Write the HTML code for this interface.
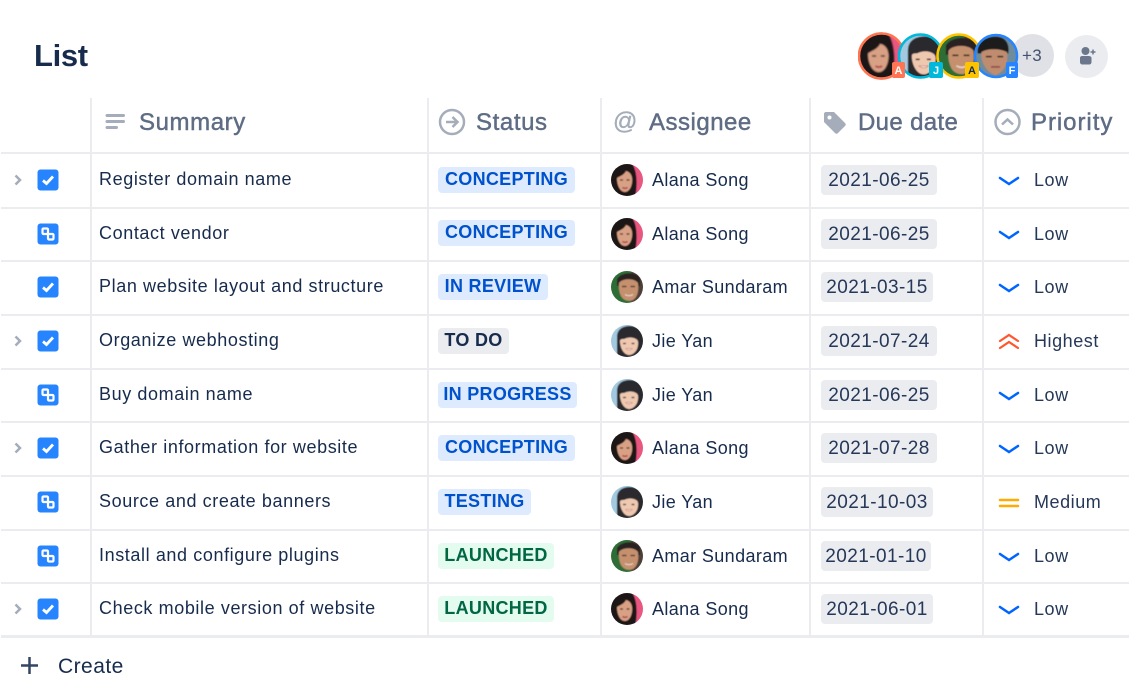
<!DOCTYPE html>
<html lang="en">
<head>
<meta charset="utf-8">
<title>List</title>
<style>
html,body{margin:0;padding:0;background:#fff}
#p{position:relative;width:1136px;height:693px;overflow:hidden;background:#fff;font-family:"Liberation Sans",sans-serif;color:#172b4d}
#p div,#p span,#p svg{position:absolute}
.h{background:#ebecf0}
.th{top:108px;font-size:24px;line-height:30px;color:#5e6c84;letter-spacing:.6px;-webkit-text-stroke:.45px #5e6c84;white-space:nowrap}
.r{left:0;width:1136px;height:54px}
.t{left:99px;top:12px;font-size:18px;line-height:26px;letter-spacing:.6px;color:#172b4d;white-space:nowrap}
.ic{left:37px;top:15px;width:22px;height:22px}
.ch{left:11px;top:19px;width:14px;height:14px}
.b{left:438px;top:13px;height:26px;border-radius:4px;font-size:18px;line-height:25px;font-weight:700;letter-spacing:.3px;text-align:center;white-space:nowrap}
.bl{background:#deebff;color:#0052cc}
.gr{background:#e3fcef;color:#006644}
.ne{background:#ebecf0;color:#172b4d}
.av{left:611px;top:10px;width:32px;height:32px}
.n{left:652px;top:13px;font-size:18px;line-height:26px;letter-spacing:.38px;white-space:nowrap}
.d{left:821px;top:11px;height:30px;border-radius:4px;background:#ebecf0;font-size:19px;line-height:32px;letter-spacing:.42px;color:#253858;text-align:center;white-space:nowrap}
.pi{left:998px;top:18px;width:22px;height:18px}
.pt{left:1034px;top:13px;font-size:18px;line-height:26px;letter-spacing:.55px;color:#253858;white-space:nowrap}
</style>
</head>
<body>
<div id="p">
<svg width="0" height="0" style="left:0;top:0">
<defs>
<clipPath id="c"><circle cx="16" cy="16" r="16"/></clipPath>
<filter id="s" x="-10%" y="-10%" width="120%" height="120%"><feGaussianBlur stdDeviation=".5"/></filter>
<symbol id="alana" viewBox="0 0 32 32"><g clip-path="url(#c)"><g filter="url(#s)">
<rect x="-2" y="-2" width="36" height="36" fill="#e9577f"/>
<path d="M-2 -2H20C26 5 27 20 24 34H-2Z" fill="#1f1416"/>
<path d="M6 15C6 8 11 6 15 7C20 8 22 13 21 19C20 25 17 28 14 28C9 28 6 21 6 15Z" fill="#d8a084"/>
<path d="M6 14C9 12 13 11 15 7C10 5 6 9 6 14Z" fill="#1f1416"/>
<path d="M9 16h3M15.500 16h3" stroke="#4a2f28" stroke-width="1.200"/>
<path d="M11.500 23.500C13 24.500 15 24.500 16.500 23.500" stroke="#b0404a" stroke-width="1.400" fill="none"/>
</g></g></symbol>
<symbol id="jie" viewBox="0 0 32 32"><g clip-path="url(#c)"><g filter="url(#s)">
<rect x="-2" y="-2" width="36" height="36" fill="#a3c9e0"/>
<path d="M6 34V12C6 4 12 1 19 1C28 1 34 8 34 16V34Z" fill="#2c2a2f"/>
<path d="M9 16C9 14 11 14 13 14C17 12 22 12 25 14C27 15 27.500 17 27 20C26.500 26 22 30 18 30C13 30 9 23 9 16Z" fill="#efc8b0"/>
<path d="M12 18.500h3M20.500 18.500h3" stroke="#4a332c" stroke-width="1.200"/>
<path d="M14.500 23.500C16.500 25.500 19.500 25.500 21.500 23.500Z" fill="#f8e8e0" stroke="#c07068" stroke-width=".5"/>
</g></g></symbol>
<symbol id="amar" viewBox="0 0 32 32"><g clip-path="url(#c)"><g filter="url(#s)">
<rect x="-2" y="-2" width="36" height="36" fill="#2f6d36"/>
<rect x="20" y="-2" width="14" height="36" fill="#4d3f38"/>
<path d="M6 8C10 1 24 0 29 7V15H6Z" fill="#2b2422"/>
<path d="M8 12C11 7 24 7 27 12C28 18 27 26 22 29C17 31 12 29 10 25C8 21 7.500 16 8 12Z" fill="#c4906e"/>
<path d="M11 15.500h4.500M19.500 15.500h4.500" stroke="#452e25" stroke-width="1.200"/>
<path d="M14 23.500C16.500 25 19.500 25 22 23.500" stroke="#e8d4c6" stroke-width="1.200" fill="none"/>
</g></g></symbol>
<symbol id="fran" viewBox="0 0 32 32"><g clip-path="url(#c)"><g filter="url(#s)">
<rect x="-2" y="-2" width="36" height="36" fill="#6f8b9a"/>
<path d="M2 14C1 4 10 0 18 1C25 2 27 8 26 14Z" fill="#1d1b1d"/>
<path d="M5 13C9 10 20 10 25 13C26 20 24 28 16 31C9 29 4 20 5 13Z" fill="#c08c6f"/>
<path d="M8.500 16.500h4.500M17.500 16.500h4.500" stroke="#33211c" stroke-width="1.200"/>
<path d="M12.500 24.500h7" stroke="#8f5048" stroke-width="1.300"/>
</g></g></symbol>
</defs>
</svg>

<div style="left:34px;top:37px;font-size:31px;line-height:38px;font-weight:700;letter-spacing:-.35px;color:#172b4d">List</div>

<!-- avatar group -->
<div style="left:1011px;top:34px;width:43px;height:43px;border-radius:50%;background:#dfe1e6"></div>
<div style="left:1022px;top:46px;font-size:17px;line-height:20px;color:#42526e;letter-spacing:.3px">+3</div>
<svg style="left:858px;top:32px" width="162" height="48" viewBox="0 0 162 48">
<circle cx="23.500" cy="24" r="22.500" fill="#fff" stroke="#ff7452" stroke-width="2.500"/>
<use href="#alana" x="2" y="2.500" width="43" height="43"/>
<circle cx="23.500" cy="24" r="22.500" fill="none" stroke="#ff7452" stroke-width="2.500"/>
<use href="#jie" x="42" y="3" width="42" height="42"/>
<circle cx="62.500" cy="24" r="21.500" fill="none" stroke="#00b8d9" stroke-width="2.500"/>
<use href="#amar" x="80" y="3" width="42" height="42"/>
<circle cx="101" cy="24" r="21.500" fill="none" stroke="#ffc400" stroke-width="2.500"/>
<use href="#fran" x="117" y="3.500" width="41" height="41"/>
<circle cx="138" cy="24" r="21" fill="none" stroke="#2684ff" stroke-width="2.500"/>
<rect x="34" y="30" width="13" height="16" rx="2" fill="#ff7452"/>
<rect x="71" y="30" width="14" height="16" rx="2" fill="#00b8d9"/>
<rect x="107" y="30" width="14" height="16" rx="2" fill="#ffc400"/>
<rect x="148" y="30" width="12" height="16" rx="2" fill="#2684ff"/>
<g font-family="Liberation Sans, sans-serif" font-size="11" font-weight="700" text-anchor="middle">
<text x="40.500" y="42" fill="#fff">A</text>
<text x="78" y="42" fill="#fff">J</text>
<text x="114" y="42" fill="#172b4d">A</text>
<text x="154" y="42" fill="#fff">F</text>
</g>
</svg>
<div style="left:1065px;top:35px;width:43px;height:43px;border-radius:50%;background:#ebecf0"></div>
<svg style="left:1076px;top:45px" width="22" height="22" viewBox="0 0 22 22">
<circle cx="9.500" cy="6" r="4" fill="#6b778c"/>
<path d="M4 13C4 11.500 5 11 6.500 11H12.500C14 11 15.500 11.500 15.500 13V17C15.500 18.500 14.500 19.500 13 19.500H6.500C5 19.500 4 18.500 4 17Z" fill="#6b778c"/>
<path d="M17 4.500v5M14.500 7h5" stroke="#6b778c" stroke-width="1.500"/>
</svg>

<!-- grid lines -->
<div class="h" style="left:90px;top:98px;width:2px;height:538px"></div>
<div class="h" style="left:427px;top:98px;width:2px;height:538px"></div>
<div class="h" style="left:600px;top:98px;width:2px;height:538px"></div>
<div class="h" style="left:809px;top:98px;width:2px;height:538px"></div>
<div class="h" style="left:982px;top:98px;width:2px;height:538px"></div>
<div class="h" style="left:1px;top:152px;width:1128px;height:2px"></div>
<div class="h" style="left:1px;top:207px;width:1128px;height:2px"></div>
<div class="h" style="left:1px;top:260px;width:1128px;height:2px"></div>
<div class="h" style="left:1px;top:314px;width:1128px;height:2px"></div>
<div class="h" style="left:1px;top:368px;width:1128px;height:2px"></div>
<div class="h" style="left:1px;top:421px;width:1128px;height:2px"></div>
<div class="h" style="left:1px;top:475px;width:1128px;height:2px"></div>
<div class="h" style="left:1px;top:529px;width:1128px;height:2px"></div>
<div class="h" style="left:1px;top:582px;width:1128px;height:2px"></div>
<div class="h" style="left:1px;top:635px;width:1128px;height:3px"></div>

<!-- header -->
<svg style="left:105px;top:113px" width="20" height="18" viewBox="0 0 20 18"><path d="M2 2.500H18.500M2 8.500H18.500M2 14.500H11.500" stroke="#a5adba" stroke-width="3" stroke-linecap="round"/></svg>
<div class="th" style="left:139px">Summary</div>
<svg style="left:438px;top:108px" width="28" height="28" viewBox="0 0 28 28"><circle cx="14" cy="14" r="12" fill="none" stroke="#a5adba" stroke-width="2.500"/><path d="M8 14H19M14.500 9L19.500 14L14.500 19" fill="none" stroke="#a5adba" stroke-width="2.500"/></svg>
<div class="th" style="left:476px">Status</div>
<div style="left:613px;top:108px;font-size:24px;line-height:28px;color:#a5adba;-webkit-text-stroke:.4px #a5adba">@</div>
<div class="th" style="left:649px;letter-spacing:.5px">Assignee</div>
<svg style="left:823px;top:111px" width="24" height="24" viewBox="0 0 24 24"><path d="M1 3C1 1.500 2 1 3 1H11L22 12C23 13 23 14 22 15L15 22C14 23 13 23 12 22L1 11Z" fill="#a5adba"/><circle cx="6.500" cy="6.500" r="2" fill="#fff"/></svg>
<div class="th" style="left:858px;letter-spacing:.35px">Due date</div>
<svg style="left:994px;top:108px" width="28" height="28" viewBox="0 0 28 28"><circle cx="13.500" cy="14" r="12" fill="none" stroke="#a5adba" stroke-width="2.500"/><path d="M8 16.500L13.500 11.500L19 16.500" fill="none" stroke="#a5adba" stroke-width="2.500"/></svg>
<div class="th" style="left:1031px;letter-spacing:.95px">Priority</div>

<!-- rows -->
<div class="r" style="top:154px">
<svg class="ch" viewBox="0 0 14 14"><path d="M4.500 2.500L9 7L4.500 11.500" fill="none" stroke="#a5adba" stroke-width="2.500"/></svg>
<svg class="ic" viewBox="0 0 22 22"><rect x=".5" width="21" height="21" rx="3" y=".5" fill="#2684ff"/><path d="M6 11.500L9.500 14.500L16 7.500" fill="none" stroke="#fff" stroke-width="2.800"/></svg>
<div class="t">Register domain name</div>
<div class="b bl" style="width:137px">CONCEPTING</div>
<svg class="av"><use href="#alana" width="32" height="32"/></svg>
<div class="n">Alana Song</div>
<div class="d" style="width:116px">2021-06-25</div>
<svg class="pi" viewBox="0 0 22 18"><path d="M2 6L11 12L20 6" fill="none" stroke="#0065ff" stroke-width="2.500" stroke-linecap="round"/></svg>
<div class="pt">Low</div>
</div>

<div class="r" style="top:208px">
<svg class="ic" viewBox="0 0 22 22"><rect x=".5" y=".5" width="21" height="21" rx="3" fill="#2684ff"/><rect x="5.500" y="5.500" width="5.500" height="5.500" rx="1" fill="none" stroke="#fff" stroke-width="2.200"/><rect x="11" y="11" width="5.500" height="5.500" rx="1" fill="none" stroke="#fff" stroke-width="2.200"/></svg>
<div class="t">Contact vendor</div>
<div class="b bl" style="width:137px;top:12px">CONCEPTING</div>
<svg class="av"><use href="#alana" width="32" height="32"/></svg>
<div class="n">Alana Song</div>
<div class="d" style="width:116px">2021-06-25</div>
<svg class="pi" viewBox="0 0 22 18"><path d="M2 6L11 12L20 6" fill="none" stroke="#0065ff" stroke-width="2.500" stroke-linecap="round"/></svg>
<div class="pt">Low</div>
</div>

<div class="r" style="top:261px">
<svg class="ic" viewBox="0 0 22 22"><rect x=".5" y=".5" width="21" height="21" rx="3" fill="#2684ff"/><path d="M6 11.500L9.500 14.500L16 7.500" fill="none" stroke="#fff" stroke-width="2.800"/></svg>
<div class="t">Plan website layout and structure</div>
<div class="b bl" style="width:110px">IN REVIEW</div>
<svg class="av"><use href="#amar" width="32" height="32"/></svg>
<div class="n">Amar Sundaram</div>
<div class="d" style="width:112px">2021-03-15</div>
<svg class="pi" viewBox="0 0 22 18"><path d="M2 6L11 12L20 6" fill="none" stroke="#0065ff" stroke-width="2.500" stroke-linecap="round"/></svg>
<div class="pt">Low</div>
</div>

<div class="r" style="top:315px">
<svg class="ch" viewBox="0 0 14 14"><path d="M4.500 2.500L9 7L4.500 11.500" fill="none" stroke="#a5adba" stroke-width="2.500"/></svg>
<svg class="ic" viewBox="0 0 22 22"><rect x=".5" y=".5" width="21" height="21" rx="3" fill="#2684ff"/><path d="M6 11.500L9.500 14.500L16 7.500" fill="none" stroke="#fff" stroke-width="2.800"/></svg>
<div class="t">Organize webhosting</div>
<div class="b ne" style="width:71px">TO DO</div>
<svg class="av"><use href="#jie" width="32" height="32"/></svg>
<div class="n">Jie Yan</div>
<div class="d" style="width:116px">2021-07-24</div>
<svg class="pi" viewBox="0 0 22 18"><path d="M2 8L11 2L20 8M2 15L11 9L20 15" fill="none" stroke="#ff5630" stroke-width="2.200" stroke-linecap="round"/></svg>
<div class="pt">Highest</div>
</div>

<div class="r" style="top:369px">
<svg class="ic" viewBox="0 0 22 22"><rect x=".5" y=".5" width="21" height="21" rx="3" fill="#2684ff"/><rect x="5.500" y="5.500" width="5.500" height="5.500" rx="1" fill="none" stroke="#fff" stroke-width="2.200"/><rect x="11" y="11" width="5.500" height="5.500" rx="1" fill="none" stroke="#fff" stroke-width="2.200"/></svg>
<div class="t">Buy domain name</div>
<div class="b bl" style="width:139px">IN PROGRESS</div>
<svg class="av"><use href="#jie" width="32" height="32"/></svg>
<div class="n">Jie Yan</div>
<div class="d" style="width:116px">2021-06-25</div>
<svg class="pi" viewBox="0 0 22 18"><path d="M2 6L11 12L20 6" fill="none" stroke="#0065ff" stroke-width="2.500" stroke-linecap="round"/></svg>
<div class="pt">Low</div>
</div>

<div class="r" style="top:422px">
<svg class="ch" viewBox="0 0 14 14"><path d="M4.500 2.500L9 7L4.500 11.500" fill="none" stroke="#a5adba" stroke-width="2.500"/></svg>
<svg class="ic" viewBox="0 0 22 22"><rect x=".5" y=".5" width="21" height="21" rx="3" fill="#2684ff"/><path d="M6 11.500L9.500 14.500L16 7.500" fill="none" stroke="#fff" stroke-width="2.800"/></svg>
<div class="t">Gather information for website</div>
<div class="b bl" style="width:137px">CONCEPTING</div>
<svg class="av"><use href="#alana" width="32" height="32"/></svg>
<div class="n">Alana Song</div>
<div class="d" style="width:116px">2021-07-28</div>
<svg class="pi" viewBox="0 0 22 18"><path d="M2 6L11 12L20 6" fill="none" stroke="#0065ff" stroke-width="2.500" stroke-linecap="round"/></svg>
<div class="pt">Low</div>
</div>

<div class="r" style="top:476px">
<svg class="ic" viewBox="0 0 22 22"><rect x=".5" y=".5" width="21" height="21" rx="3" fill="#2684ff"/><rect x="5.500" y="5.500" width="5.500" height="5.500" rx="1" fill="none" stroke="#fff" stroke-width="2.200"/><rect x="11" y="11" width="5.500" height="5.500" rx="1" fill="none" stroke="#fff" stroke-width="2.200"/></svg>
<div class="t">Source and create banners</div>
<div class="b bl" style="width:93px">TESTING</div>
<svg class="av"><use href="#jie" width="32" height="32"/></svg>
<div class="n">Jie Yan</div>
<div class="d" style="width:112px">2021-10-03</div>
<svg class="pi" viewBox="0 0 22 18"><path d="M2 6H20M2 12H20" fill="none" stroke="#ffab00" stroke-width="2.500" stroke-linecap="round"/></svg>
<div class="pt">Medium</div>
</div>

<div class="r" style="top:530px">
<svg class="ic" viewBox="0 0 22 22"><rect x=".5" y=".5" width="21" height="21" rx="3" fill="#2684ff"/><rect x="5.500" y="5.500" width="5.500" height="5.500" rx="1" fill="none" stroke="#fff" stroke-width="2.200"/><rect x="11" y="11" width="5.500" height="5.500" rx="1" fill="none" stroke="#fff" stroke-width="2.200"/></svg>
<div class="t">Install and configure plugins</div>
<div class="b gr" style="width:116px">LAUNCHED</div>
<svg class="av"><use href="#amar" width="32" height="32"/></svg>
<div class="n">Amar Sundaram</div>
<div class="d" style="width:110px">2021-01-10</div>
<svg class="pi" viewBox="0 0 22 18"><path d="M2 6L11 12L20 6" fill="none" stroke="#0065ff" stroke-width="2.500" stroke-linecap="round"/></svg>
<div class="pt">Low</div>
</div>

<div class="r" style="top:583px">
<svg class="ch" viewBox="0 0 14 14"><path d="M4.500 2.500L9 7L4.500 11.500" fill="none" stroke="#a5adba" stroke-width="2.500"/></svg>
<svg class="ic" viewBox="0 0 22 22"><rect x=".5" y=".5" width="21" height="21" rx="3" fill="#2684ff"/><path d="M6 11.500L9.500 14.500L16 7.500" fill="none" stroke="#fff" stroke-width="2.800"/></svg>
<div class="t">Check mobile version of website</div>
<div class="b gr" style="width:116px">LAUNCHED</div>
<svg class="av"><use href="#alana" width="32" height="32"/></svg>
<div class="n">Alana Song</div>
<div class="d" style="width:112px">2021-06-01</div>
<svg class="pi" viewBox="0 0 22 18"><path d="M2 6L11 12L20 6" fill="none" stroke="#0065ff" stroke-width="2.500" stroke-linecap="round"/></svg>
<div class="pt">Low</div>
</div>

<!-- create -->
<svg style="left:20px;top:656px" width="19" height="19" viewBox="0 0 19 19"><path d="M9.500 1V18M1 9.500H18" stroke="#344563" stroke-width="2.500"/></svg>
<div style="left:58px;top:654px;font-size:21px;line-height:26px;letter-spacing:.45px;color:#172b4d">Create</div>
</div>
</body>
</html>
